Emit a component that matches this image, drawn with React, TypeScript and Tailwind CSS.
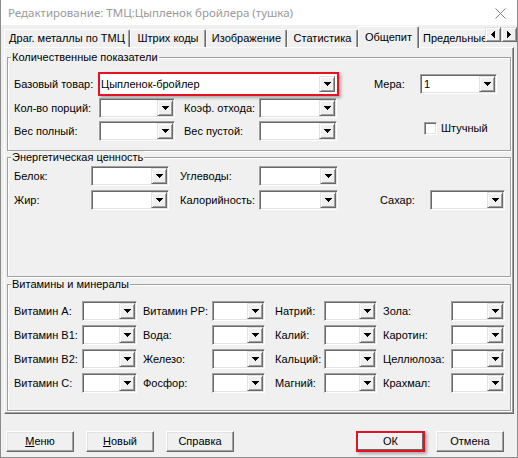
import React from "react";

const FONT = { fontFamily: '"Liberation Sans", Arial, sans-serif' };

function TriDown() {
  return (
    <svg width="7" height="4" viewBox="0 0 7 4" shapeRendering="crispEdges">
      <path d="M0 0h7v1h-1v1h-1v1h-1v1h-1v-1h-1v-1h-1v-1h-1z" fill="#000" />
    </svg>
  );
}

function TriLeft() {
  return (
    <svg width="4" height="7" viewBox="0 0 4 7" shapeRendering="crispEdges">
      <path d="M4 0v7h-1v-1h-1v-1h-1v-1h-1v-1h1v-1h1v-1h1v-1z" fill="#000" />
    </svg>
  );
}

function TriRight() {
  return (
    <svg width="4" height="7" viewBox="0 0 4 7" shapeRendering="crispEdges">
      <path d="M0 0v7h1v-1h1v-1h1v-1h1v-1h-1v-1h-1v-1h-1v-1z" fill="#000" />
    </svg>
  );
}

function DropBtn({ red }: { red?: boolean }) {
  return (
    <div
      className={
        (red ? "my-[2px] mr-[2px] w-[16px] " : "m-[1px] w-[16px] ") +
        "flex items-center justify-center bg-[#f0f0f0] border border-t-[#e3e3e3] border-l-[#e3e3e3] border-b-[#696969] border-r-[#696969] shadow-[inset_1px_1px_0_#fff,inset_-1px_-1px_0_#a0a0a0]"
      }
    >
      <TriDown />
    </div>
  );
}

function Combo({ className, value, red }: { className: string; value?: string; red?: boolean }) {
  if (red) {
    return (
      <div className={"flex bg-white border-2 border-[#e81123] shadow-[2px_2px_3px_rgba(0,0,0,0.3)] " + className}>
        <div className="flex-1 flex items-center pl-[1px] text-[11px] whitespace-nowrap overflow-hidden">{value}</div>
        <DropBtn red />
      </div>
    );
  }
  return (
    <div
      className={
        "flex bg-white border border-t-[#a0a0a0] border-l-[#a0a0a0] border-b-white border-r-white shadow-[inset_1px_1px_0_#696969,inset_-1px_-1px_0_#e3e3e3] " +
        className
      }
    >
      <div className="flex-1 flex items-center pl-[3px] text-[11px] whitespace-nowrap overflow-hidden">{value}</div>
      <DropBtn />
    </div>
  );
}

function Group({ title, className, children }: { title: string; className: string; children: React.ReactNode }) {
  return (
    <fieldset
      className={
        "border border-[#a0a0a0] shadow-[inset_1px_1px_0_#fff,1px_1px_0_#fff] p-0 m-0 min-w-0 " + className
      }
    >
      <legend className="ml-[3px] px-[1px] bg-[#f0f0f0] text-[11px] leading-[13px]">{title}</legend>
      {children}
    </fieldset>
  );
}

function Btn({ children, className, red }: { children: React.ReactNode; className?: string; red?: boolean }) {
  return (
    <button
      className={
        (red
          ? "border-2 border-[#e81123] shadow-[inset_-1px_-1px_0_#696969,inset_1px_1px_0_#fff,2px_2px_3px_rgba(0,0,0,0.3)] "
          : "border border-t-white border-l-white border-b-[#696969] border-r-[#696969] shadow-[inset_-1px_-1px_0_#a0a0a0,inset_1px_1px_0_#e3e3e3] ") +
        "h-[21px] bg-[#f0f0f0] text-[11px] flex items-center justify-center " +
        (className ?? "")
      }
    >
      {children}
    </button>
  );
}

function Tab({ label, className, selected }: { label: string; className: string; selected?: boolean }) {
  return (
    <div
      className={
        (selected
          ? "relative z-10 h-[22px] -mb-px bg-[#f0f0f0] "
          : "h-[18px] ") +
        "flex items-center justify-center whitespace-nowrap overflow-hidden text-[11px] rounded-t-[2px] border-t border-l border-white border-r border-r-[#696969] shadow-[inset_-1px_0_0_#a0a0a0] " +
        className
      }
    >
      {label}
    </div>
  );
}

const vitRows: [string, string, string, string][] = [
  ["Витамин А:", "Витамин PP:", "Натрий:", "Зола:"],
  ["Витамин В1:", "Вода:", "Калий:", "Каротин:"],
  ["Витамин В2:", "Железо:", "Кальций:", "Целлюлоза:"],
  ["Витамин С:", "Фосфор:", "Магний:", "Крахмал:"],
];

export default function App() {
  return (
    <div
      className="w-[518px] h-[458px] bg-[#f0f0f0] flex flex-col border-x border-b border-[#8c8c8c] text-black overflow-hidden"
      style={FONT}
    >
      {/* Title bar */}
      <div className="h-[25px] bg-white flex items-center justify-between pl-[7px] pr-[11px] shrink-0">
        <span className="text-[12px] text-[#999999]" style={{ fontFamily: '"Noto Sans", "Liberation Sans", sans-serif', fontSize: "11.5px" }}>
          Редактирование: ТМЦ:Цыпленок бройлера (тушка)
        </span>
        <svg width="11" height="11" viewBox="0 0 11 11" className="mt-[2px]">
          <path d="M0.5 0.5L10.5 10.5M10.5 0.5L0.5 10.5" stroke="#808080" strokeWidth="1" />
        </svg>
      </div>

      {/* Tabs row */}
      <div className="h-[22px] flex items-end pl-[3px] shrink-0">
        <Tab label="Драг. металлы по ТМЦ" className="w-[126px]" />
        <Tab label="Штрих коды" className="w-[76px]" />
        <Tab label="Изображение" className="w-[81px]" />
        <Tab label="Статистика" className="w-[71px]" />
        <Tab label="Общепит" className="w-[61px]" selected />
        <div className="h-[18px] w-[66px] flex items-center pl-[3px] whitespace-nowrap overflow-hidden text-[11px] rounded-tl-[2px] border-t border-l border-white">
          Предельные
        </div>
        <div className="self-start mt-[2px] flex">
          {[<TriLeft key="l" />, <TriRight key="r" />].map((t, i) => (
            <div
              key={i}
              className="w-[16px] h-[15px] flex items-center justify-center bg-[#f0f0f0] border border-t-[#e3e3e3] border-l-[#e3e3e3] border-b-[#696969] border-r-[#696969] shadow-[inset_1px_1px_0_#fff,inset_-1px_-1px_0_#a0a0a0]"
            >
              {t}
            </div>
          ))}
        </div>
      </div>

      {/* Panel */}
      <div className="mx-[3px] h-[367px] shrink-0 flex flex-col pt-[3px] px-[2px] border-t border-l border-white border-r border-b border-r-[#696969] border-b-[#696969] shadow-[inset_-1px_-1px_0_#a0a0a0] text-[11px]">
        {/* Group 1 */}
        <Group title="Количественные показатели" className="h-[100px] shrink-0">
          <div className="flex flex-col pl-[6px] pt-[8px]">
            <div className="h-[24px] flex items-center">
              <span className="w-[84px]">Базовый товар:</span>
              <Combo className="w-[241px] h-[24px]" value="Цыпленок-бройлер" red />
              <span className="ml-[35px] w-[46px]">Мера:</span>
              <Combo className="w-[77px] h-[20px]" value="1" />
            </div>
            <div className="mt-[2px] h-[20px] flex items-center">
              <span className="w-[85px]">Кол-во порций:</span>
              <Combo className="w-[76px] h-[20px]" />
              <span className="ml-[9px] w-[75px]">Коэф. отхода:</span>
              <Combo className="w-[78px] h-[20px]" />
            </div>
            <div className="mt-[3px] h-[20px] flex items-center">
              <span className="w-[85px]">Вес полный:</span>
              <Combo className="w-[76px] h-[20px]" />
              <span className="ml-[9px] w-[75px]">Вес пустой:</span>
              <Combo className="w-[78px] h-[20px]" />
              <div className="ml-[87px] self-start mt-[1px] w-[13px] h-[13px] bg-white border border-t-[#a0a0a0] border-l-[#a0a0a0] border-b-white border-r-white shadow-[inset_1px_1px_0_#696969,inset_-1px_-1px_0_#e3e3e3]" />
              <span className="ml-[4px] self-start -mt-[1px]">Штучный</span>
            </div>
          </div>
        </Group>

        {/* Group 2 */}
        <Group title="Энергетическая ценность" className="h-[126px] shrink-0">
          <div className="flex flex-col pl-[6px] pt-[2px] gap-[4px]">
            <div className="h-[20px] flex items-center">
              <span className="w-[77px]">Белок:</span>
              <Combo className="w-[78px] h-[20px]" />
              <span className="ml-[11px] w-[79px]">Углеводы:</span>
              <Combo className="w-[79px] h-[20px]" />
            </div>
            <div className="h-[20px] flex items-center">
              <span className="w-[77px]">Жир:</span>
              <Combo className="w-[78px] h-[20px]" />
              <span className="ml-[11px] w-[79px]">Калорийность:</span>
              <Combo className="w-[79px] h-[20px]" />
              <span className="ml-[42px] w-[50px]">Сахар:</span>
              <Combo className="w-[75px] h-[20px]" />
            </div>
          </div>
        </Group>

        {/* Group 3 */}
        <Group title="Витамины и минералы" className="mt-[1px] h-[133px] shrink-0">
          <div className="flex flex-col pl-[6px] pt-[10px] gap-[4px]">
            {vitRows.map((r) => (
              <div key={r[0]} className="h-[20px] flex items-center">
                <span className="w-[68px]">{r[0]}</span>
                <Combo className="w-[55px] h-[20px]" />
                <span className="ml-[6px] w-[69px]">{r[1]}</span>
                <Combo className="w-[53px] h-[20px]" />
                <span className="ml-[10px] w-[49px]">{r[2]}</span>
                <Combo className="w-[53px] h-[20px]" />
                <span className="ml-[6px] w-[68px]">{r[3]}</span>
                <Combo className="w-[54px] h-[20px]" />
              </div>
            ))}
          </div>
        </Group>
      </div>

      {/* Buttons */}
      <div className="mt-[17px] flex pl-[5px]">
        <Btn className="w-[68px]">
          <span><span className="underline">М</span>еню</span>
        </Btn>
        <Btn className="ml-[12px] w-[68px]">
          <span><span className="underline">Н</span>овый</span>
        </Btn>
        <Btn className="ml-[12px] w-[68px]">Справка</Btn>
        <Btn className="ml-[122px] w-[69px]" red>
          ОК
        </Btn>
        <Btn className="ml-[11px] w-[68px]">Отмена</Btn>
      </div>
    </div>
  );
}
